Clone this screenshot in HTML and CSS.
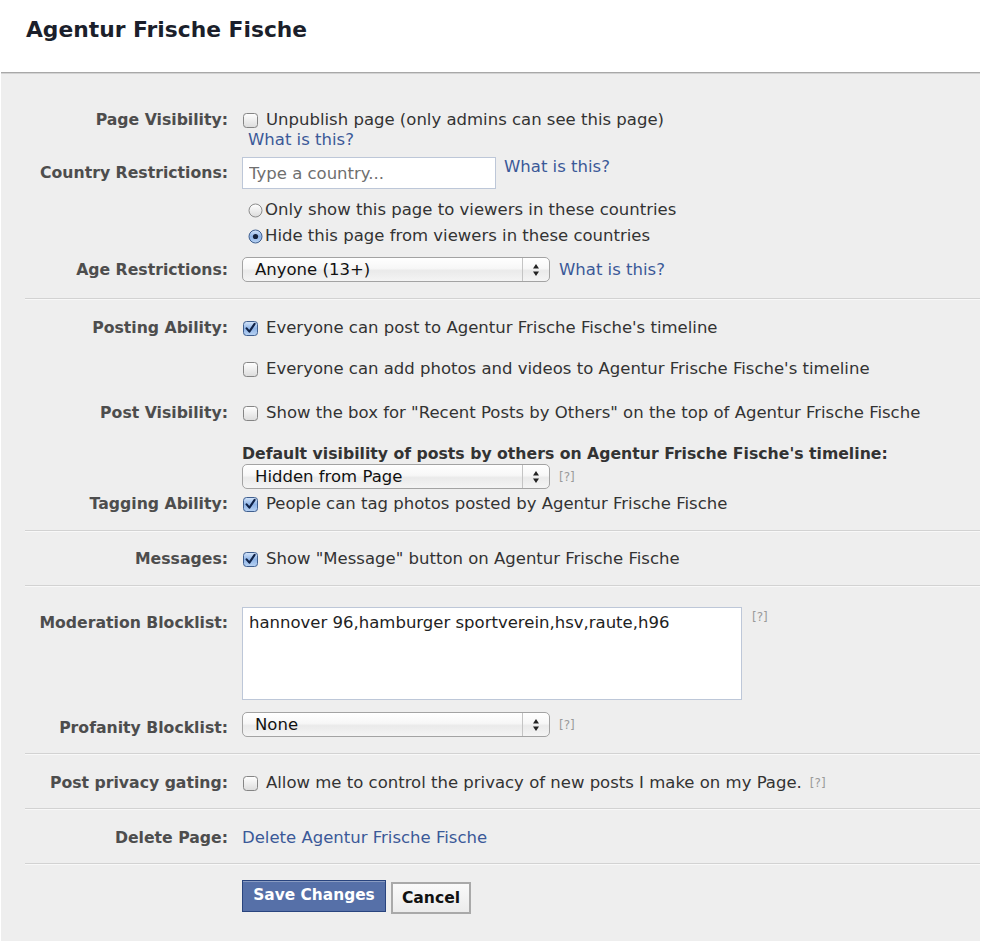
FILE: index.html
```html
<!DOCTYPE html>
<html>
<head>
<meta charset="utf-8">
<link rel="stylesheet" href="styles.css">
</head>
<body>
<svg class="defs" width="0" height="0" aria-hidden="true">
  <defs>
    <linearGradient id="gWhite" x1="0" y1="0" x2="0" y2="1">
      <stop offset="0" stop-color="#ffffff"/>
      <stop offset="1" stop-color="#dcdcdc"/>
    </linearGradient>
    <linearGradient id="gBlue" x1="0" y1="0" x2="0" y2="1">
      <stop offset="0" stop-color="#d6e6fa"/>
      <stop offset="0.5" stop-color="#8fb4e6"/>
      <stop offset="1" stop-color="#b9d3f3"/>
    </linearGradient>
  </defs>
</svg>

<div class="header">
  <h1 class="title">Agentur Frische Fische</h1>
</div>

<div class="panel">
  <div class="section s1">
    <div class="row top">
      <div class="label">Page Visibility:</div>
      <div class="field">
        <div class="opt"><svg class="cb" viewBox="0 0 15 15"><rect x="0.5" y="0.5" width="14" height="14" rx="3" fill="url(#gWhite)" stroke="#858585"/></svg><span>Unpublish page (only admins can see this page)</span></div>
        <a class="link indent" href="#">What is this?</a>
      </div>
    </div>
    <div class="row mid r-country">
      <div class="label">Country Restrictions:</div>
      <div class="field inline top-al">
        <input class="country" type="text" placeholder="Type a country...">
        <a class="link after-input" href="#">What is this?</a>
      </div>
    </div>
    <div class="row top r-radio1">
      <div class="label"></div>
      <div class="field">
        <div class="opt radio"><svg class="rb" viewBox="0 0 15 15"><circle cx="7.5" cy="7.5" r="6.5" fill="url(#gWhite)" stroke="#8c8c8c"/></svg><span>Only show this page to viewers in these countries</span></div>
        <div class="opt radio r2"><svg class="rb" viewBox="0 0 15 15"><circle cx="7.5" cy="7.5" r="6.5" fill="url(#gBlue)" stroke="#3f5f8f"/><circle cx="7.5" cy="7.5" r="2.6" fill="#15223a"/></svg><span>Hide this page from viewers in these countries</span></div>
      </div>
    </div>
    <div class="row mid r-age">
      <div class="label">Age Restrictions:</div>
      <div class="field inline mid-al">
        <div class="select"><span class="sel-text">Anyone (13+)</span><span class="sel-arrows"><svg viewBox="0 0 8 14" width="8" height="14"><path d="M4 1 L7 5.5 L1 5.5 Z M4 13 L7 8.5 L1 8.5 Z" fill="#222"/></svg></span></div>
        <a class="link gap9" href="#">What is this?</a>
      </div>
    </div>
  </div>

  <div class="section s2">
    <div class="row top">
      <div class="label">Posting Ability:</div>
      <div class="field">
        <div class="opt"><svg class="cb" viewBox="0 0 15 15"><rect x="0.5" y="0.5" width="14" height="14" rx="3" fill="url(#gBlue)" stroke="#3f5f8f"/><path d="M3.6 7.4 L6.4 10.6 L11.6 2.8" fill="none" stroke="#0f2247" stroke-width="2.1" stroke-linecap="round" stroke-linejoin="round"/></svg><span>Everyone can post to Agentur Frische Fische's timeline</span></div>
      </div>
    </div>
    <div class="row top r-photos">
      <div class="label"></div>
      <div class="field">
        <div class="opt"><svg class="cb" viewBox="0 0 15 15"><rect x="0.5" y="0.5" width="14" height="14" rx="3" fill="url(#gWhite)" stroke="#858585"/></svg><span>Everyone can add photos and videos to Agentur Frische Fische's timeline</span></div>
      </div>
    </div>
    <div class="row top r-postvis">
      <div class="label">Post Visibility:</div>
      <div class="field">
        <div class="opt"><svg class="cb" viewBox="0 0 15 15"><rect x="0.5" y="0.5" width="14" height="14" rx="3" fill="url(#gWhite)" stroke="#858585"/></svg><span>Show the box for "Recent Posts by Others" on the top of Agentur Frische Fische</span></div>
      </div>
    </div>
    <div class="row top r-default">
      <div class="label"></div>
      <div class="field">
        <div class="subhead">Default visibility of posts by others on Agentur Frische Fische's timeline:</div>
        <div class="inline mid-al sel-line">
          <div class="select"><span class="sel-text">Hidden from Page</span><span class="sel-arrows"><svg viewBox="0 0 8 14" width="8" height="14"><path d="M4 1 L7 5.5 L1 5.5 Z M4 13 L7 8.5 L1 8.5 Z" fill="#222"/></svg></span></div>
          <span class="help gap9">[?]</span>
        </div>
      </div>
    </div>
    <div class="row top r-tag">
      <div class="label">Tagging Ability:</div>
      <div class="field">
        <div class="opt"><svg class="cb" viewBox="0 0 15 15"><rect x="0.5" y="0.5" width="14" height="14" rx="3" fill="url(#gBlue)" stroke="#3f5f8f"/><path d="M3.6 7.4 L6.4 10.6 L11.6 2.8" fill="none" stroke="#0f2247" stroke-width="2.1" stroke-linecap="round" stroke-linejoin="round"/></svg><span>People can tag photos posted by Agentur Frische Fische</span></div>
      </div>
    </div>
  </div>

  <div class="section s3">
    <div class="row top">
      <div class="label">Messages:</div>
      <div class="field">
        <div class="opt"><svg class="cb" viewBox="0 0 15 15"><rect x="0.5" y="0.5" width="14" height="14" rx="3" fill="url(#gBlue)" stroke="#3f5f8f"/><path d="M3.6 7.4 L6.4 10.6 L11.6 2.8" fill="none" stroke="#0f2247" stroke-width="2.1" stroke-linecap="round" stroke-linejoin="round"/></svg><span>Show "Message" button on Agentur Frische Fische</span></div>
      </div>
    </div>
  </div>

  <div class="section s4">
    <div class="row top">
      <div class="label lbl-offset">Moderation Blocklist:</div>
      <div class="field inline top-al">
        <textarea class="blocklist">hannover 96,hamburger sportverein,hsv,raute,h96</textarea>
        <span class="help help-ta">[?]</span>
      </div>
    </div>
    <div class="row top r-prof">
      <div class="label lbl-offset">Profanity Blocklist:</div>
      <div class="field inline mid-al">
        <div class="select"><span class="sel-text">None</span><span class="sel-arrows"><svg viewBox="0 0 8 14" width="8" height="14"><path d="M4 1 L7 5.5 L1 5.5 Z M4 13 L7 8.5 L1 8.5 Z" fill="#222"/></svg></span></div>
        <span class="help gap9">[?]</span>
      </div>
    </div>
  </div>

  <div class="section s5">
    <div class="row top">
      <div class="label">Post privacy gating:</div>
      <div class="field">
        <div class="opt"><svg class="cb" viewBox="0 0 15 15"><rect x="0.5" y="0.5" width="14" height="14" rx="3" fill="url(#gWhite)" stroke="#858585"/></svg><span>Allow me to control the privacy of new posts I make on my Page.</span><span class="help gap8">[?]</span></div>
      </div>
    </div>
  </div>

  <div class="section s6">
    <div class="row top">
      <div class="label">Delete Page:</div>
      <div class="field">
        <a class="link" href="#">Delete Agentur Frische Fische</a>
      </div>
    </div>
  </div>

  <div class="section s7">
    <div class="row top">
      <div class="label"></div>
      <div class="field buttons">
        <button class="btn btn-save" type="button">Save Changes</button>
        <button class="btn btn-cancel" type="button">Cancel</button>
      </div>
    </div>
  </div>
</div>
</body>
</html>
```

FILE: styles.css
```css
html, body {
  margin: 0;
  padding: 0;
  background: #ffffff;
}

body {
  font-family: "DejaVu Sans", "Liberation Sans", sans-serif;
  font-size: 16.5px;
  line-height: 20px;
  color: #333333;
  width: 981px;
}

.defs {
  position: absolute;
  width: 0;
  height: 0;
}

.header {
  height: 72px;
  border-bottom: 1px solid #a8a8a8;
  box-shadow: 0 1px 0 #d2d2d2;
  margin: 0 1px;
}

.title {
  margin: 0;
  padding: 17px 0 0 25px;
  font-size: 21.8px;
  line-height: 26px;
  font-weight: bold;
  color: #1b1f2b;
}

.panel {
  margin: 1px 1px 0 1px;
  background: #eeeeee;
  padding-bottom: 0;
}

.section {
  margin-left: 24px;
}

.section + .section {
  border-top: 1px solid #d2d2d2;
  box-shadow: inset 0 1px 0 #f8f8f8;
}

.row {
  display: grid;
  grid-template-columns: 203px 1fr;
  column-gap: 14px;
}

.row.top { align-items: start; }
.row.mid { align-items: center; }

.label {
  text-align: right;
  font-weight: bold;
  font-size: 15.7px;
  color: #4d4d4d;
  white-space: nowrap;
}

.field {
  min-width: 0;
}

.inline {
  display: flex;
}
.top-al { align-items: flex-start; }
.mid-al { align-items: center; }

.opt {
  display: flex;
  align-items: center;
  white-space: nowrap;
}

.cb {
  width: 15px;
  height: 15px;
  margin-left: 1px;
  margin-right: 8px;
  flex: none;
}

.rb {
  width: 15px;
  height: 15px;
  margin-left: 6px;
  margin-right: 2px;
  flex: none;
}

.link {
  color: #3b5998;
  text-decoration: none;
}

.indent {
  display: block;
  margin-left: 6px;
}

.after-input {
  margin-left: 8px;
}

.gap9 { margin-left: 9px; }
.gap8 { margin-left: 8px; }

.help {
  font-size: 12px;
  color: #9a9a9a;
}

/* Section 1 */
.s1 { padding: 36px 0 16px; }
.r-country { margin-top: 7px; }
.r-radio1 { margin-top: 11px; }
.radio.r2 { margin-top: 6px; }
.r-age { margin-top: 11px; }

.country {
  box-sizing: border-box;
  width: 254px;
  height: 32px;
  margin: 0;
  border: 1px solid #bdc7d8;
  background: #ffffff;
  padding: 1px 6px 0;
  font-family: "DejaVu Sans", "Liberation Sans", sans-serif;
  font-size: 16.5px;
  color: #333333;
  outline: none;
}
.country::placeholder {
  color: #6f6f6f;
}

.select {
  box-sizing: border-box;
  width: 308px;
  height: 25px;
  display: flex;
  align-items: center;
  border: 1px solid #a3a3a3;
  border-radius: 5px;
  background: linear-gradient(#ffffff 0%, #f7f7f7 45%, #eaeaea 55%, #f4f4f4 100%);
  box-shadow: inset 0 1px 0 #ffffff;
  color: #111111;
}
.sel-text {
  flex: 1;
  padding-left: 12px;
  white-space: nowrap;
}
.sel-arrows {
  width: 26px;
  height: 100%;
  border-left: 1px solid #c4c4c4;
  display: flex;
  align-items: center;
  justify-content: center;
}

/* Section 2 */
.s2 { padding: 19px 0 16px; }
.r-photos { margin-top: 21px; }
.r-postvis { margin-top: 24px; }
.r-default { margin-top: 21px; }
.sel-line { margin-top: 0; }
.r-tag { margin-top: 5px; }

.subhead {
  font-weight: bold;
  font-size: 15.7px;
  white-space: nowrap;
}

/* Section 3 */
.s3 { padding: 18px 0 16px; }

/* Section 4 */
.s4 { padding: 21px 0 15px; }
.lbl-offset { margin-top: 6px; }
.r-prof { margin-top: 12px; }

.blocklist {
  box-sizing: border-box;
  width: 500px;
  height: 93px;
  margin: 0;
  border: 1px solid #bdc7d8;
  background: #ffffff;
  padding: 5px 6px 4px;
  font-family: "DejaVu Sans", "Liberation Sans", sans-serif;
  font-size: 16.5px;
  line-height: 20px;
  color: #222222;
  resize: none;
  outline: none;
  overflow: hidden;
}

.help-ta {
  margin-left: 10px;
  line-height: 20px;
}

/* Section 5, 6 */
.s5 { padding: 19px 0 15px; }
.s6 { padding: 19px 0 15px; }

/* Section 7 */
.s7 { padding: 16px 0 27px; }

.buttons {
  display: flex;
  align-items: flex-start;
  gap: 5px;
}

.btn {
  margin: 0;
  font-family: "DejaVu Sans", "Liberation Sans", sans-serif;
  font-weight: bold;
  cursor: pointer;
}

.btn-save {
  box-sizing: border-box;
  width: 144px;
  height: 32px;
  padding: 0 0 3px;
  border: 1px solid #29447e;
  background: #5670a8;
  box-shadow: inset 0 1px 0 #8a9cc2;
  color: #ffffff;
  font-size: 15.4px;
}

.btn-cancel {
  box-sizing: border-box;
  width: 80px;
  height: 32px;
  margin-top: 2px;
  padding: 0;
  border: 2px solid #a9a9a9;
  background: linear-gradient(#fafafa, #ececec);
  color: #111111;
  font-size: 15.6px;
}
```
